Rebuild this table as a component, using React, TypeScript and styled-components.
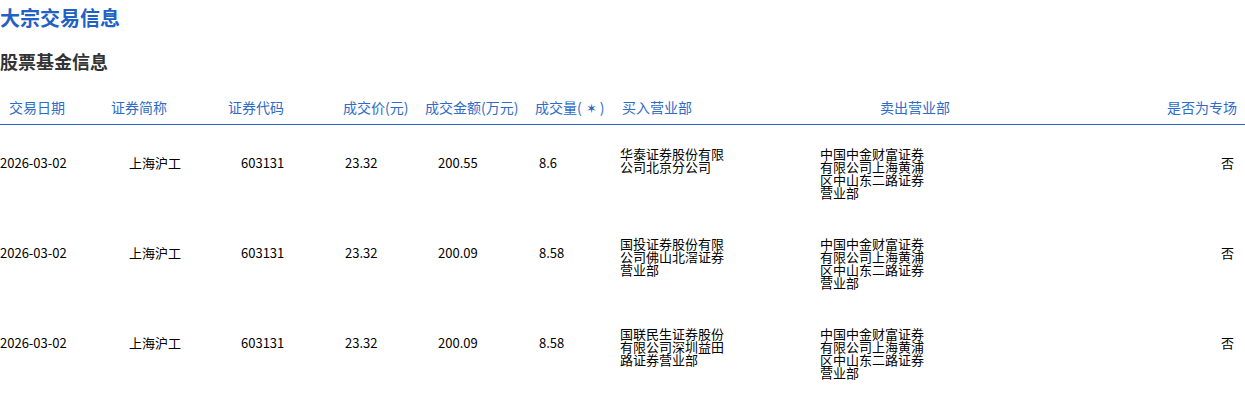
import React from "react";
import styled, { createGlobalStyle } from "styled-components";

const GlobalStyle = createGlobalStyle`
  html, body { margin: 0; padding: 0; background: #fff; }
  body {
    font-family: "Noto Sans CJK SC", "Noto Sans", sans-serif;
    color: #000;
  }
`;

const Page = styled.div`
  width: 1245px;
  display: flex;
  flex-direction: column;
`;

const Title = styled.h2`
  margin: 0;
  padding-top: 4px;
  font-size: 20px;
  line-height: 28px;
  font-weight: 700;
  color: #2160c4;
`;

const SubTitle = styled.h3`
  margin: 16px 0 0;
  font-size: 18px;
  line-height: 26px;
  font-weight: 700;
  color: #333;
`;

const COLS = "100px 110px 110px 100px 110px 85px 200px 185px 1fr";

const HeadRow = styled.div`
  margin-top: 23px;
  display: grid;
  grid-template-columns: ${COLS};
  padding-bottom: 6px;
  border-bottom: 1px solid #2a63c2;
`;

const HeadCell = styled.div<{ $pad: number; $right?: boolean }>`
  font-size: 14px;
  line-height: 20px;
  color: #2f6bc8;
  white-space: nowrap;
  text-align: ${(p) => (p.$right ? "right" : "left")};
  padding-left: ${(p) => (p.$right ? 0 : p.$pad)}px;
  padding-right: ${(p) => (p.$right ? p.$pad : 0)}px;
`;

const Star = styled.span`
  display: inline-block;
  margin: 0 3px 0 4px;
  font-size: 13px;
`;

const DataRow = styled.div`
  display: grid;
  grid-template-columns: ${COLS};
  align-items: start;
  height: 90px;
  box-sizing: border-box;
  padding-top: 22px;
`;

const DataCell = styled.div<{ $pad: number; $right?: boolean }>`
  font-size: 13px;
  line-height: 32px;
  color: #000;
  white-space: nowrap;
  text-align: ${(p) => (p.$right ? "right" : "left")};
  padding-left: ${(p) => (p.$right ? 0 : p.$pad)}px;
  padding-right: ${(p) => (p.$right ? p.$pad : 0)}px;
`;

const AddrCell = styled.div<{ $pad: number }>`
  font-size: 13px;
  line-height: 13px;
  color: #000;
  padding-left: ${(p) => p.$pad}px;
  width: 105px;
  word-break: break-all;
`;

type Col = { title: React.ReactNode; key: string; headPad: number; dataPad: number; right?: boolean; addr?: boolean };

const columns: Col[] = [
  { key: "date", title: "交易日期", headPad: 9, dataPad: 0 },
  { key: "name", title: "证券简称", headPad: 11, dataPad: 29 },
  { key: "code", title: "证券代码", headPad: 18, dataPad: 31 },
  { key: "price", title: "成交价(元)", headPad: 23, dataPad: 25 },
  { key: "amount", title: "成交金额(万元)", headPad: 5, dataPad: 18 },
  { key: "vol", title: <>成交量(<Star>✶</Star>)</>, headPad: 5, dataPad: 9 },
  { key: "buy", title: "买入营业部", headPad: 7, dataPad: 5, addr: true },
  { key: "sell", title: "卖出营业部", headPad: 65, dataPad: 5, addr: true },
  { key: "special", title: "是否为专场", headPad: 8, dataPad: 11, right: true },
];

const SELLER = "中国中金财富证券有限公司上海黄浦区中山东二路证券营业部";

const rows: string[][] = [
  ["2026-03-02", "上海沪工", "603131", "23.32", "200.55", "8.6", "华泰证券股份有限公司北京分公司", SELLER, "否"],
  ["2026-03-02", "上海沪工", "603131", "23.32", "200.09", "8.58", "国投证券股份有限公司佛山北滘证券营业部", SELLER, "否"],
  ["2026-03-02", "上海沪工", "603131", "23.32", "200.09", "8.58", "国联民生证券股份有限公司深圳益田路证券营业部", SELLER, "否"],
];

export default function App() {
  return (
    <>
      <GlobalStyle />
      <Page>
        <Title>大宗交易信息</Title>
        <SubTitle>股票基金信息</SubTitle>
        <HeadRow>
          {columns.map((c) => (
            <HeadCell key={c.key} $pad={c.headPad} $right={c.right}>
              {c.title}
            </HeadCell>
          ))}
        </HeadRow>
        {rows.map((r, i) => (
          <DataRow key={i}>
            {r.map((v, j) => {
              const c = columns[j];
              return c.addr ? (
                <AddrCell key={j} $pad={c.dataPad}>{v}</AddrCell>
              ) : (
                <DataCell key={j} $pad={c.dataPad} $right={c.right}>{v}</DataCell>
              );
            })}
          </DataRow>
        ))}
      </Page>
    </>
  );
}
